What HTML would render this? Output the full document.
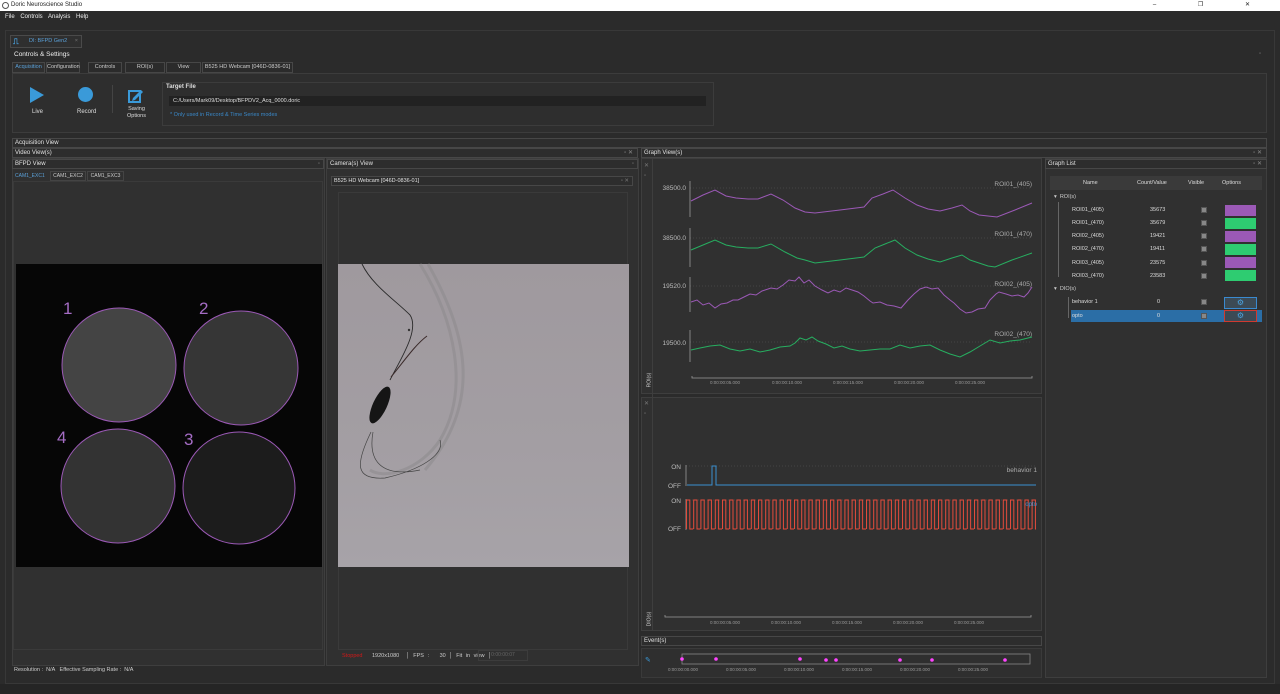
<!DOCTYPE html>
<html><head><meta charset="utf-8"><style>
*{margin:0;padding:0;box-sizing:border-box}
body{width:1280px;height:694px;background:#2b2b2b;font-family:"Liberation Sans",sans-serif;font-size:6px;color:#ddd;position:relative;overflow:hidden}
.a{position:absolute}
.bar{position:absolute;background:#2d2d2d;border:1px solid #474747;color:#e0e0e0;font-size:6px;padding-left:2px;line-height:8px}
.pan{position:absolute;background:#303030;border:1px solid #3e3e3e}
.tab{position:absolute;top:62px;height:11px;border:1px solid #474747;background:#2b2b2b;font-size:5.5px;line-height:9px;text-align:center;color:#ccc}
.r{position:absolute;left:1072px;font-size:5.5px;color:#ddd}
.c{position:absolute;left:1150px;font-size:5.5px;color:#ddd}
.cb{position:absolute;left:1201px;width:6px;height:6px;background:#888;border:1px solid #555}
.sw{position:absolute;left:1225px;width:31px;height:11px}
</style></head><body>
<div class="a" style="left:0;top:0;width:1280px;height:11px;background:#fff;color:#222;font-size:6px;line-height:11px;padding-left:11px">Doric Neuroscience Studio<span style="position:absolute;right:10px;letter-spacing:20px">–  ❐ ✕</span></div>
<div class="a" style="left:2px;top:2px;width:7px;height:7px;border:1px solid #555;border-radius:50%"></div>
<div class="a" style="left:5px;top:14px;font-size:6px;color:#eee;word-spacing:4px">File Controls Analysis Help</div>
<div class="a" style="left:5px;top:30px;width:1270px;height:654px;border:1px solid #383838;background:#2b2b2b"></div>
<div class="a" style="left:10px;top:35px;width:72px;height:13px;background:#2f2f2f;border:1px solid #4a4a4a;color:#5aa0d8;font-size:5.5px;line-height:11px;padding-left:18px">DI: BFPD Gen2 <span style="color:#777;margin-left:6px">×</span></div>
<div class="a" style="left:13px;top:37px;color:#4aa3e0;font-size:8px;font-weight:bold">⎍</div>
<div class="a" style="left:14px;top:51px;font-size:6.5px;color:#eee">Controls &amp; Settings</div>
<div class="a" style="left:1259px;top:51px;color:#777;font-size:6px">▫</div>
<div class="tab" style="left:12px;width:33px;color:#5aa0d8;background:#2f2f2f">Acquisition</div>
<div class="tab" style="left:46px;width:34px">Configuration</div>
<div class="tab" style="left:88px;width:34px">Controls</div>
<div class="tab" style="left:125px;width:40px">ROI(s)</div>
<div class="tab" style="left:166px;width:35px">View</div>
<div class="tab" style="left:202px;width:91px">B525 HD Webcam [046D-0836-01]</div>
<div class="a" style="left:12px;top:73px;width:1255px;height:60px;background:#2e2e2e;border:1px solid #3c3c3c"></div>
<svg class="a" style="left:29px;top:87px" width="16" height="16"><path d="M1,0 L15,8 L1,16Z" fill="#3a9ad9"/></svg>
<div class="a" style="left:32px;top:109px;font-size:6px">Live</div>
<div class="a" style="left:78px;top:87px;width:15px;height:15px;border-radius:50%;background:#3a9ad9"></div>
<div class="a" style="left:77px;top:109px;font-size:6px">Record</div>
<div class="a" style="left:112px;top:85px;width:1px;height:28px;background:#444"></div>
<svg class="a" style="left:128px;top:88px" width="16" height="15"><rect x="1" y="3" width="11" height="11" fill="none" stroke="#3a9ad9" stroke-width="2"/><path d="M5,10 L13,2 L15,4 L7,12 L4,13Z" fill="#3a9ad9"/></svg>
<div class="a" style="left:127px;top:106px;font-size:5.5px;text-align:center;line-height:7px">Saving<br>Options</div>
<div class="a" style="left:162px;top:82px;width:552px;height:44px;border:1px solid #3c3c3c"></div>
<div class="a" style="left:166px;top:84px;font-size:6px;font-weight:bold">Target File</div>
<div class="a" style="left:169px;top:96px;width:537px;height:10px;background:#222;font-size:5.5px;line-height:10px;padding-left:4px">C:/Users/Mark09/Desktop/BFPDV2_Acq_0000.doric</div>
<div class="a" style="left:170px;top:112px;font-size:5.5px;color:#3a88c8">* Only used in Record &amp; Time Series modes</div>

<div class="bar" style="left:12px;top:138px;width:1255px;height:10px">Acquisition View</div>
<div class="bar" style="left:12px;top:148px;width:626px;height:10px">Video View(s)<span style="position:absolute;right:4px;color:#888">▫ ✕</span></div>
<div class="bar" style="left:641px;top:148px;width:626px;height:10px">Graph View(s)<span style="position:absolute;right:4px;color:#888">▫ ✕</span></div>
<div class="pan" style="left:12px;top:158px;width:313px;height:508px"></div>
<div class="bar" style="left:12px;top:159px;width:312px;height:10px">BFPD View<span style="position:absolute;right:3px;color:#777">▫</span></div>
<div class="a" style="left:12px;top:171px;width:38px;height:10px;color:#5aa0d8;font-size:5px;line-height:10px;padding-left:3px">CAM1_EXC1</div>
<div class="a" style="left:50px;top:171px;width:36px;height:10px;border:1px solid #444;font-size:5px;line-height:8px;text-align:center;color:#ccc">CAM1_EXC2</div>
<div class="a" style="left:87px;top:171px;width:37px;height:10px;border:1px solid #444;font-size:5px;line-height:8px;text-align:center;color:#ccc">CAM1_EXC3</div>
<div class="a" style="left:13px;top:181px;width:310px;height:469px;border:1px solid #3a3a3a"></div>
<div class="a" style="left:16px;top:264px;width:306px;height:303px;background:#060606"></div>
<div class="a" style="left:14px;top:667px;font-size:5.5px;color:#ccc">Resolution : &nbsp;N/A &nbsp; Effective Sampling Rate : &nbsp;N/A</div>

<div class="pan" style="left:326px;top:158px;width:313px;height:508px"></div>
<div class="bar" style="left:327px;top:159px;width:311px;height:10px">Camera(s) View<span style="position:absolute;right:3px;color:#777">▫</span></div>
<div class="bar" style="left:331px;top:176px;width:302px;height:10px;font-size:5.5px">B525 HD Webcam [046D-0836-01]<span style="position:absolute;right:3px;color:#777">▫ ✕</span></div>
<div class="a" style="left:338px;top:192px;width:290px;height:458px;border:1px solid #3a3a3a"></div>
<div class="a" style="left:338px;top:264px;width:291px;height:303px;background:linear-gradient(180deg,#9f999e,#a39ea3 60%,#a7a3a8)"></div>
<div class="a" style="left:342px;top:653px;font-size:5.5px;color:#d01818">Stopped</div>
<div class="a" style="left:372px;top:653px;font-size:5.5px;color:#ccc;word-spacing:2px">1920x1080 &nbsp;│ FPS : &nbsp; 30 │ Fit in view │</div>
<div class="a" style="left:478px;top:650px;width:50px;height:11px;border:1px solid #3c3c3c;font-size:5px;color:#666;line-height:9px;text-align:center">0:00:00:07</div>

<div class="pan" style="left:641px;top:158px;width:401px;height:236px"></div>
<div class="pan" style="left:641px;top:397px;width:401px;height:234px"></div>
<div class="a" style="left:652px;top:158px;width:1px;height:472px;background:#3e3e3e"></div>
<div class="a" style="left:644px;top:161px;color:#777;font-size:6px;line-height:10px">✕<br>▫</div>
<div class="a" style="left:644px;top:399px;color:#777;font-size:6px;line-height:10px">✕<br>▫</div>
<div class="a" style="left:642px;top:377px;font-size:5px;color:#ccc;transform:rotate(-90deg)">ROI(s)</div>
<div class="a" style="left:642px;top:616px;font-size:5px;color:#ccc;transform:rotate(-90deg)">DIO(s)</div>
<div class="bar" style="left:641px;top:636px;width:401px;height:10px">Event(s)</div>
<div class="a" style="left:641px;top:648px;width:401px;height:30px;background:#2f2f2f;border:1px solid #3a3a3a"></div>
<div class="a" style="left:645px;top:656px;color:#3a9ad9;font-size:7px">✎</div>

<div class="pan" style="left:1045px;top:158px;width:222px;height:520px"></div>
<div class="bar" style="left:1045px;top:159px;width:222px;height:10px">Graph List<span style="position:absolute;right:4px;color:#888">▫ ✕</span></div>
<div class="a" style="left:1050px;top:176px;width:212px;height:14px;background:#3a3a3a;font-size:5.5px;line-height:14px;color:#ddd"><span class="a" style="left:33px">Name</span><span class="a" style="left:87px">Count/Value</span><span class="a" style="left:138px">Visible</span><span class="a" style="left:172px">Options</span></div>
<div class="a" style="left:1071px;top:310px;width:191px;height:12px;background:#2b6ea6"></div>
<div class="a" style="left:1054px;top:194px;font-size:5.5px;color:#ccc">▾ &nbsp;ROI(s)</div>
<div class="a" style="left:1054px;top:286px;font-size:5.5px;color:#ccc">▾ &nbsp;DIO(s)</div>
<div class="a" style="left:1058px;top:202px;width:1px;height:75px;background:#666"></div>
<div class="a" style="left:1068px;top:297px;width:1px;height:21px;background:#666"></div>
<div class="r" style="top:207px">ROI01_(405)</div><div class="c" style="top:207px">35673</div><div class="cb" style="top:207px"></div><div class="sw" style="top:205px;background:#9b59b6"></div>
<div class="r" style="top:220px">ROI01_(470)</div><div class="c" style="top:220px">35679</div><div class="cb" style="top:220px"></div><div class="sw" style="top:218px;background:#2ecc71"></div>
<div class="r" style="top:233px">ROI02_(405)</div><div class="c" style="top:233px">19421</div><div class="cb" style="top:233px"></div><div class="sw" style="top:231px;background:#9b59b6"></div>
<div class="r" style="top:246px">ROI02_(470)</div><div class="c" style="top:246px">19411</div><div class="cb" style="top:246px"></div><div class="sw" style="top:244px;background:#2ecc71"></div>
<div class="r" style="top:260px">ROI03_(405)</div><div class="c" style="top:260px">23575</div><div class="cb" style="top:260px"></div><div class="sw" style="top:257px;background:#9b59b6"></div>
<div class="r" style="top:273px">ROI03_(470)</div><div class="c" style="top:273px">23583</div><div class="cb" style="top:273px"></div><div class="sw" style="top:270px;background:#2ecc71"></div>
<div class="r" style="top:299px">behavior 1</div><div class="c" style="top:299px;left:1157px">0</div><div class="cb" style="top:299px"></div>
<div class="r" style="top:313px">opto</div><div class="c" style="top:313px;left:1157px">0</div><div class="cb" style="top:313px"></div>
<div class="a" style="left:1224px;top:297px;width:33px;height:12px;background:#3c4a55;border:1px solid #3a8ad0;color:#4aa3e0;font-size:8px;line-height:10px;text-align:center">⚙</div>
<div class="a" style="left:1224px;top:310px;width:33px;height:12px;background:#3c4a55;border:1px solid #d03a30;color:#4aa3e0;font-size:8px;line-height:10px;text-align:center">⚙</div>

<div class="a" style="left:0;top:684px;width:1280px;height:10px;background:#252525"></div>

<svg class="a" style="left:0;top:0" width="1280" height="694">
<defs><pattern id="sq" x="686" y="0" width="7.2" height="694" patternUnits="userSpaceOnUse"><path d="M0.5,529 V500 H3.8 V529 H7.2" fill="none" stroke="#e74c3c" stroke-width="1"/></pattern></defs>
<g stroke="#9b59b6" stroke-width="1">
<circle cx="119" cy="365" r="57" fill="#444"/><circle cx="241" cy="368" r="57" fill="#363636"/>
<circle cx="118" cy="486" r="57" fill="#333"/><circle cx="239" cy="488" r="56" fill="#1c1c1c"/></g>
<g fill="#a46cc4" font-size="17" font-family="Liberation Sans"><text x="63" y="314">1</text><text x="199" y="314">2</text><text x="57" y="443">4</text><text x="184" y="445">3</text></g>
<g fill="none" stroke-width="3" stroke="#8f8c8f" opacity=".6"><path d="M420,264 C455,320 470,390 440,440 C420,470 385,480 370,470"/><path d="M428,264 C465,330 485,400 425,470"/></g>
<path d="M362,264 C372,285 395,300 410,315 C420,330 400,360 390,380" fill="none" stroke="#2a2a2a" stroke-width=".9"/>
<path d="M371,432 C355,465 355,480 385,478 C420,470 445,455 440,440 M373,432 C368,460 380,478 420,470" fill="none" stroke="#444" stroke-width=".7"/>
<path d="M391,377 C405,360 415,345 427,336" fill="none" stroke="#3a2a2a" stroke-width="1"/>
<ellipse cx="380" cy="405" rx="7" ry="20" transform="rotate(25 380 405)" fill="#151515"/>
<circle cx="409" cy="330" r="1.2" fill="#333"/>
<g stroke="#5a5a5a" stroke-dasharray="1 2" stroke-width=".6"><line x1="690" y1="188" x2="1032" y2="188"/><line x1="690" y1="238" x2="1032" y2="238"/><line x1="690" y1="286" x2="1032" y2="286"/><line x1="690" y1="342" x2="1032" y2="342"/><line x1="686" y1="466" x2="1036" y2="466"/><line x1="686" y1="500" x2="1036" y2="500"/></g>
<g stroke="#999" stroke-width=".8" fill="none"><path d="M690,181 V217"/><path d="M690,228 V267"/><path d="M690,277 V312"/><path d="M690,330 V362"/><path d="M692,376 V378 H1032 V376"/><path d="M686,465 V486"/><path d="M686,499 V530"/><path d="M665,615 V617 H1031 V615"/></g>
<g font-family="Liberation Sans" font-size="6.5" fill="#bbb" text-anchor="end"><text x="686" y="190">38500.0</text><text x="686" y="240">38500.0</text><text x="686" y="288">19520.0</text><text x="686" y="345">19500.0</text><text x="681" y="469">ON</text><text x="681" y="488">OFF</text><text x="681" y="503">ON</text><text x="681" y="531">OFF</text></g>
<g font-family="Liberation Sans" font-size="6.5" fill="#aaa" text-anchor="end"><text x="1032" y="186">ROI01_(405)</text><text x="1032" y="236">ROI01_(470)</text><text x="1032" y="286">ROI02_(405)</text><text x="1032" y="336">ROI02_(470)</text><text x="1037" y="472">behavior 1</text></g>
<g font-family="Liberation Sans" font-size="4.5" fill="#999" text-anchor="middle"><text x="725" y="384">0:00:00:05.000</text><text x="787" y="384">0:00:00:10.000</text><text x="848" y="384">0:00:00:15.000</text><text x="909" y="384">0:00:00:20.000</text><text x="970" y="384">0:00:00:25.000</text>
<text x="725" y="624">0:00:00:05.000</text><text x="786" y="624">0:00:00:10.000</text><text x="847" y="624">0:00:00:15.000</text><text x="908" y="624">0:00:00:20.000</text><text x="969" y="624">0:00:00:25.000</text>
<text x="683" y="671">0:00:00:00.000</text><text x="741" y="671">0:00:00:05.000</text><text x="799" y="671">0:00:00:10.000</text><text x="857" y="671">0:00:00:15.000</text><text x="915" y="671">0:00:00:20.000</text><text x="973" y="671">0:00:00:25.000</text></g>
<g fill="none" stroke-width="1">
<polyline stroke="#9b59b6" points="691,201 703,195 715,190 726,196 736,198 748,199 758,199 771,194 783,200 795,208 805,212 815,213 840,210 864,207 872,198 883,194 893,190 905,198 917,205 928,209 940,211 952,208 962,205 970,211 979,215 988,216 997,217 1015,210 1032,203"/>
<polyline stroke="#27ae60" points="691,250 703,245 715,240 726,245 736,247 748,248 758,248 771,244 785,252 797,258 805,260 815,263 840,260 864,257 875,248 885,244 895,240 905,248 917,255 928,259 940,262 952,258 962,255 970,260 979,263 988,266 995,267 1012,260 1032,253"/>
<polyline stroke="#9b59b6" points="691,302 697,300 703,305 709,303 715,308 721,304 727,303 733,300 738,300 744,297 750,294 756,295 762,291 771,288 777,289 783,285 789,280 795,281 799,277 804,283 809,280 815,286 822,290 828,293 834,290 840,292 846,288 852,290 858,292 864,296 870,301 873,303 880,302 887,305 894,306 901,308 908,300 914,294 920,289 926,287 932,289 938,288 944,295 950,300 954,303 960,309 966,313 972,312 978,309 985,308 990,300 996,294 999,292 1006,294 1012,296 1018,295 1024,297 1028,293 1032,287"/>
<polyline stroke="#27ae60" points="691,350 700,348 710,346 720,345 730,349 740,351 750,349 760,352 770,350 780,347 790,346 795,343 800,338 806,340 812,337 818,341 826,344 834,348 842,346 850,349 860,351 870,350 880,349 890,349 900,345 910,348 920,346 930,345 940,350 950,354 960,357 970,352 980,346 990,340 1000,343 1010,341 1020,340 1032,337"/>
<path stroke="#3a8fd0" d="M687,485 H712 V466 H716 V485 H1036"/>
<rect x="686" y="498" width="350" height="33" fill="url(#sq)" stroke="none"/>
</g>
<text x="1037" y="506" font-family="Liberation Sans" font-size="6" fill="#3a8fd0" text-anchor="end">opto</text>
<rect x="682" y="654" width="348" height="10" fill="none" stroke="#888" stroke-width=".8"/>
<g fill="#ff44ff"><circle cx="682" cy="659" r="1.8"/><circle cx="716" cy="659" r="1.8"/><circle cx="800" cy="659" r="1.8"/><circle cx="826" cy="660" r="1.8"/><circle cx="836" cy="660" r="1.8"/><circle cx="900" cy="660" r="1.8"/><circle cx="932" cy="660" r="1.8"/><circle cx="1005" cy="660" r="1.8"/></g>
</svg>
</body></html>
